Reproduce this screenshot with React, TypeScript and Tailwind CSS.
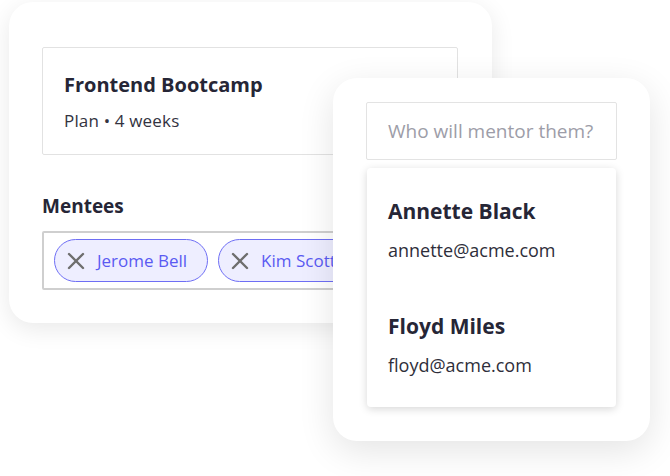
import React from "react";

const mentees = ["Jerome Bell", "Kim Scott"];
const mentors = [
  { name: "Annette Black", email: "annette@acme.com" },
  { name: "Floyd Miles", email: "floyd@acme.com" },
];

function XIcon() {
  return (
    <svg width="18" height="18" viewBox="0 0 18 18" className="shrink-0">
      <path d="M2 2L16 16M16 2L2 16" stroke="#6e6e6e" strokeWidth="2.4" strokeLinecap="round" />
    </svg>
  );
}

export default function App() {
  return (
    <div className="relative w-[670px] h-[476px] bg-white overflow-hidden text-[#262636]" style={{ fontFamily: "'Open Sans', 'Noto Sans', sans-serif" }}>
      {/* plan card */}
      <div className="ml-[9px] mt-[2px] w-[483px] h-[321px] rounded-[24px] bg-white shadow-[0_6px_24px_rgba(0,0,0,0.09)] pt-[45px] pl-[33px] overflow-hidden">
        <div className="w-[416px] h-[108px] border border-[#e2e2e2] rounded-[2px] px-[21px] pt-[24px]">
          <div className="text-[20px] font-bold leading-[26px]">Frontend Bootcamp</div>
          <div className="mt-[13px] text-[17px] leading-[20px] tracking-[0.01em] text-[#33333f]">Plan • 4 weeks</div>
        </div>
        <div className="mt-[39px] text-[19px] font-bold leading-[24px]">Mentees</div>
        <div className="mt-[13px] w-[460px] h-[59px] border-2 border-[#cfcfcf] rounded-[2px] flex items-center gap-[10px] pl-[10px]">
          {mentees.map((m) => (
            <div key={m} className="h-[43px] shrink-0 rounded-full border-[1.5px] border-[#6e6ef4] bg-[#eeeeff] flex items-center gap-[12px] pl-[12px] pr-[20px] text-[17px] text-[#5a5af2]">
              <XIcon />
              <span>{m}</span>
            </div>
          ))}
        </div>
      </div>

      {/* mentor picker */}
      <div className="absolute left-[333px] top-[78px] w-[317px] h-[363px] rounded-[24px] bg-white shadow-[0_10px_36px_rgba(0,0,0,0.11)] pt-[24px] pl-[33px]">
        <div className="w-[251px] h-[58px] border border-[#e3e3e3] rounded-[2px] flex items-center pl-[21px] text-[19px] text-[#9d9da8]">
          Who will mentor them?
        </div>
        <div className="mt-[8px] ml-[1px] w-[249px] h-[239px] rounded-[4px] bg-white shadow-[0_2px_8px_rgba(0,0,0,0.16)] pl-[21px] pt-[30px]">
          {mentors.map((p, i) => (
            <div key={p.name} className={i > 0 ? "mt-[51px]" : ""}>
              <div className="text-[21px] font-bold leading-[26px]">{p.name}</div>
              <div className="mt-[14px] text-[18px] leading-[24px] text-[#2e2e3a]">{p.email}</div>
            </div>
          ))}
        </div>
      </div>
    </div>
  );
}
